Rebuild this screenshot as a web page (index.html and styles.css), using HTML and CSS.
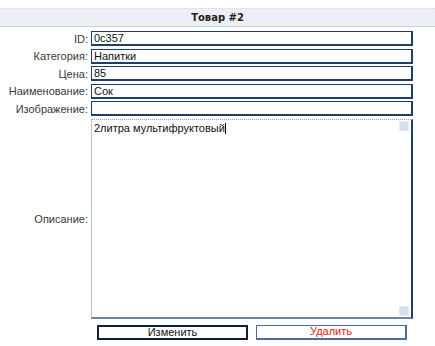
FILE: index.html
```html
<!DOCTYPE html>
<html>
<head>
    <title>Товар #2</title>
    <link rel="stylesheet" href="styles.css">
</head>
<body>
    <div class="page">
        <div class="header">Товар #2</div>
        <form class="item-form">
            <label class="lbl">ID:</label>
            <input class="field" type="text" value="0c357">

            <label class="lbl">Категория:</label>
            <input class="field" type="text" value="Напитки">

            <label class="lbl">Цена:</label>
            <input class="field" type="text" value="85">

            <label class="lbl">Наименование:</label>
            <input class="field" type="text" value="Сок">

            <label class="lbl">Изображение:</label>
            <input class="field" type="text" value="">

            <label class="lbl">Описание:</label>
            <div class="memo">
                <div class="memo-text">2литра мультифруктовый<span class="caret"></span></div>
                <div class="scroll">
                    <span class="scroll-btn"></span>
                    <span class="scroll-btn"></span>
                </div>
            </div>

            <div></div>
            <div class="actions">
                <button type="button" class="btn btn-save">Изменить</button>
                <button type="button" class="btn btn-delete">Удалить</button>
            </div>
        </form>
    </div>
</body>
</html>
```

FILE: styles.css
```css
body {
    margin: 0;
    padding: 0;
    background: #ffffff;
    font-family: "Liberation Sans", Arial, sans-serif;
    font-size: 11px;
    color: #3a3a3a;
}

.page {
    padding-top: 8px;
    width: 435px;
}

.header {
    height: 17px;
    line-height: 17px;
    text-align: center;
    font-family: "DejaVu Sans", Verdana, sans-serif;
    font-size: 10px;
    font-weight: bold;
    color: #222222;
    background: #eceff5;
    border-top: 1px dotted #d4d8df;
    border-bottom: 1px solid #c9ced8;
    margin-bottom: 4px;
}

.item-form {
    display: grid;
    grid-template-columns: 88px 322px;
    column-gap: 3px;
    row-gap: 2.5px;
}

.lbl {
    text-align: right;
    align-self: center;
    white-space: nowrap;
}

.field {
    box-sizing: border-box;
    height: 15px;
    margin: 0;
    padding: 0 2px;
    border: 1px solid #1d3f6e;
    border-right-width: 2px;
    border-bottom-width: 2px;
    font-family: "Liberation Sans", Arial, sans-serif;
    font-size: 11px;
    color: #111111;
    background: #ffffff;
    outline: none;
}

.memo {
    box-sizing: border-box;
    height: 200px;
    display: flex;
    border-top: 1px dotted #9aa3b0;
    border-left: 1px solid #b7c0cc;
    border-right: 2px solid #1d3f6e;
    border-bottom: 2px solid #6d86a8;
}

.memo-text {
    flex: 1;
    padding: 2px 2px;
    color: #111111;
}

.caret {
    display: inline-block;
    width: 1px;
    height: 11px;
    background: #000000;
    vertical-align: -2px;
}

.scroll {
    width: 11px;
    display: flex;
    flex-direction: column;
    justify-content: space-between;
    padding: 1px 1px 1px 0;
}

.scroll-btn {
    display: block;
    width: 10px;
    height: 10px;
    background: #d5deee;
    border: 1px solid #e4e9f2;
    box-sizing: border-box;
}

.actions {
    display: flex;
    justify-content: center;
    gap: 8px;
    margin-top: 3.5px;
}

.btn {
    box-sizing: border-box;
    width: 151px;
    height: 15px;
    padding: 0;
    background: #ffffff;
    font-family: "Liberation Sans", Arial, sans-serif;
    font-size: 11px;
    line-height: 11px;
}

.btn-save {
    color: #111111;
    border: 2px solid #0d1f3a;
}

.btn-delete {
    color: #e01818;
    border: 1px solid #4d6d99;
    border-right-width: 2px;
    border-bottom-width: 2px;
}
```
